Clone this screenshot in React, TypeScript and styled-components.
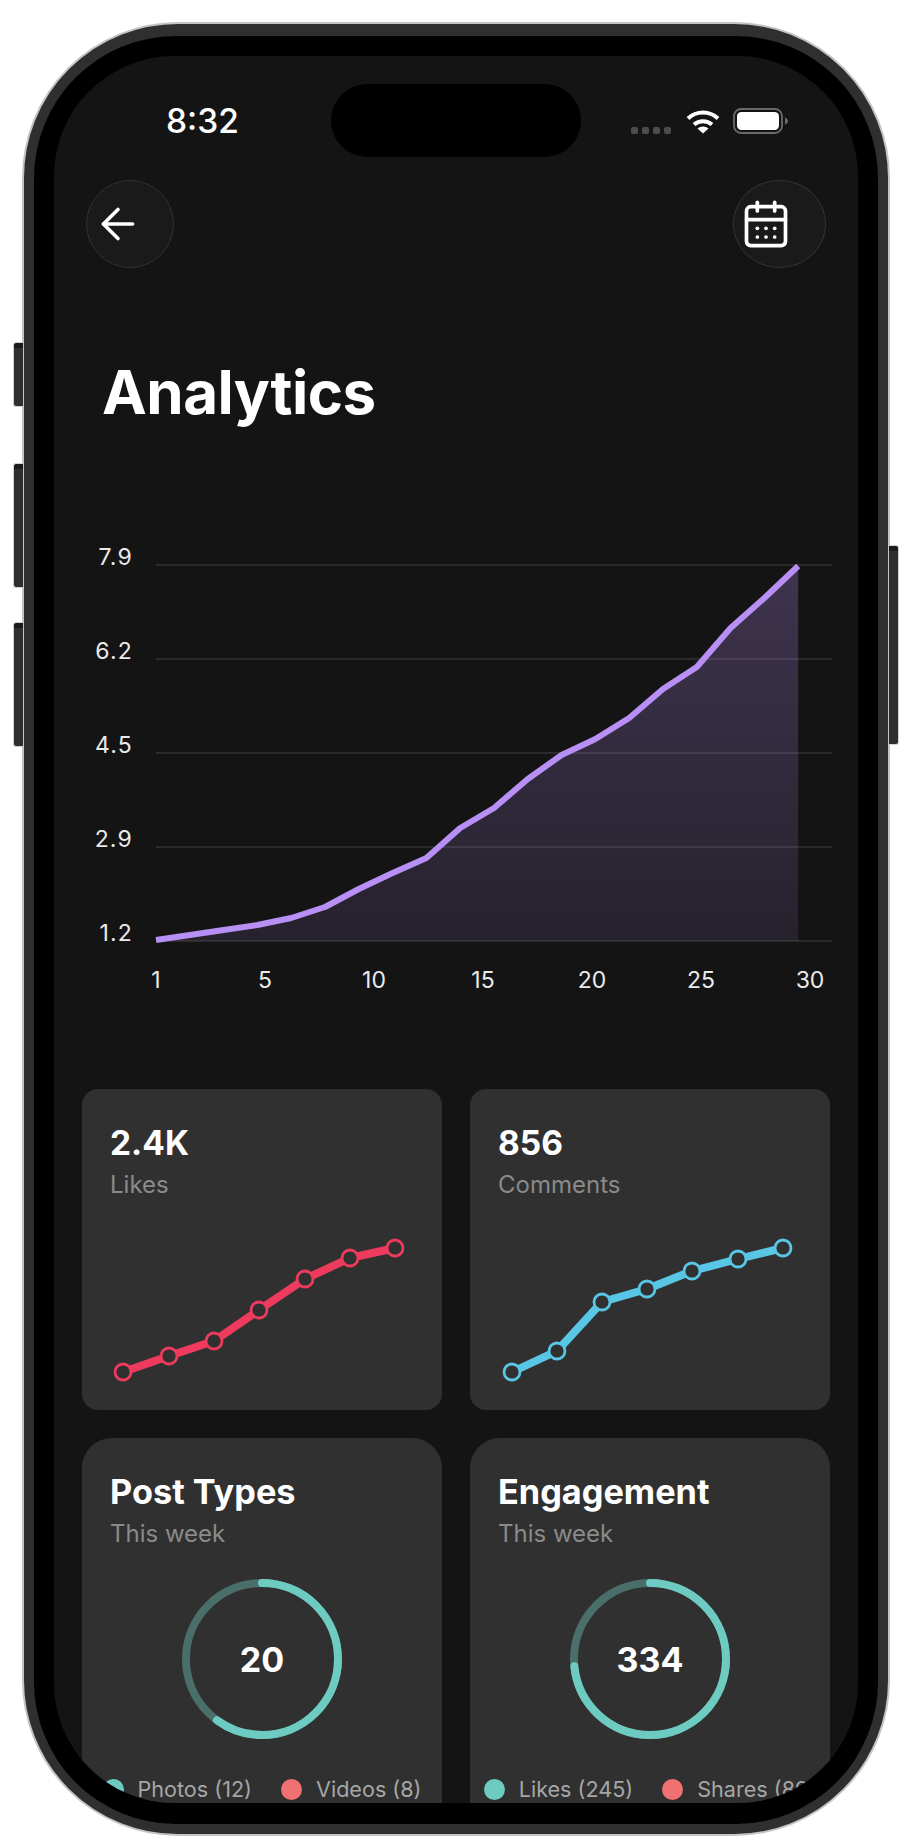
import styled, { createGlobalStyle } from "styled-components";
import { ArrowLeft, CalendarDays } from "lucide-react";

const GlobalStyle = createGlobalStyle`
  * {
    box-sizing: border-box;
  }

  html,
  body {
    margin: 0;
    background: #ffffff;
  }

  body {
    font-family: Inter, "Noto Sans", "Liberation Sans", sans-serif;
    color: #ffffff;
  }
`;

const Page = styled.div`
  width: 912px;
  height: 1840px;
  padding: 22px 22px 4px;
  overflow: hidden;
`;

const Device = styled.div`
  position: relative;
  width: 868px;
  height: 1814px;
  padding: 12px 10px 10px;
  background: #2f2f2f;
  border: 2px solid #c4c4c4;
  border-radius: 156px;
`;

const Bezel = styled.div`
  height: 100%;
  padding: 20px 20px 21px;
  background: #000000;
  border-radius: 142px;
`;

const Screen = styled.div`
  height: 1747px;
  background: #141414;
  border-radius: 120px;
  overflow: hidden;
`;

const SideButton = styled.div<{ $side: "left" | "right"; $top: number; $height: number }>`
  position: absolute;
  top: ${(props) => props.$top}px;
  ${(props) => props.$side}: -11px;
  width: 10px;
  height: ${(props) => props.$height}px;
  background: linear-gradient(#1b1b1b 0, #1b1b1b 5px, #2f2f2f 5px);
  border: 1.5px solid #cfcfcf;
  border-${(props) => (props.$side === "left" ? "right" : "left")}: none;
  border-radius: ${(props) => (props.$side === "left" ? "3px 0 0 3px" : "0 3px 3px 0")};
`;

const StatusBar = styled.div`
  display: grid;
  grid-template-columns: 1fr 250px 1fr;
  height: 124px;
  padding-top: 28px;
`;

const Time = styled.div`
  padding: 18px 0 0 112px;
  font-size: 33.5px;
  line-height: 38px;
  font-weight: 500;
`;

const Island = styled.div`
  width: 250px;
  height: 73px;
  background: #000000;
  border-radius: 37px;
`;

const StatusIcons = styled.div`
  display: flex;
  align-items: flex-start;
  padding: 24px 0 0 50px;
`;

const SignalDots = styled.div`
  display: flex;
  gap: 4px;
  margin: 19px 15px 0 0;
`;

const SignalDot = styled.span`
  width: 7px;
  height: 7px;
  background: #4c4c4c;
  border-radius: 2px;
`;

const WifiIcon = styled.svg`
  width: 34px;
  height: 26px;
  margin-right: 13px;
`;

const BatteryIcon = styled.svg`
  width: 56px;
  height: 26px;
`;

const NavRow = styled.div`
  display: flex;
  justify-content: space-between;
  padding: 0 32px;
`;

const RoundButton = styled.button<{ $width: number }>`
  display: flex;
  align-items: center;
  width: ${(props) => props.$width}px;
  height: 88px;
  padding: 0 0 0 6px;
  color: #ffffff;
  background: #1a1a1a;
  border: 1.5px solid #333333;
  border-radius: 50%;
`;

const Title = styled.h1`
  margin: 86px 0 0;
  padding-left: 48px;
  font-size: 60px;
  line-height: 76px;
  font-weight: 700;
  letter-spacing: -0.5px;
`;

const ChartSvg = styled.svg`
  display: block;
  width: 804px;
  height: 480px;
  margin-top: 110px;
`;

const AxisText = styled.text`
  font-family: Inter, "Noto Sans", sans-serif;
  font-size: 23px;
  fill: #eaeaea;
`;

const ValueAxisText = styled(AxisText)`
  letter-spacing: 1.2px;
`;

const CardGrid = styled.div`
  display: grid;
  grid-template-columns: 360px 360px;
  grid-auto-rows: min-content;
  gap: 28px;
  margin-top: 69px;
  padding: 0 28px;
`;

const StatCard = styled.div`
  height: 321px;
  background: #303030;
  border-radius: 16px;
`;

const DonutCard = styled.div`
  height: 420px;
  background: #303030;
  border-radius: 30px;
`;

const CardHead = styled.div`
  height: 120px;
  padding: 33px 0 0 28px;
`;

const CardValue = styled.div`
  font-size: 33.5px;
  line-height: 42px;
  font-weight: 700;
`;

const CardTitle = styled.div`
  font-size: 34.3px;
  line-height: 42px;
  font-weight: 700;
`;

const CardLabel = styled.div`
  margin-top: 6px;
  font-size: 24px;
  line-height: 30px;
  color: #8a8a8a;
`;

const SparkSvg = styled.svg`
  display: block;
  width: 360px;
  height: 201px;
`;

const DonutWrap = styled.div`
  display: grid;
  place-items: center;
  width: 160px;
  height: 160px;
  margin: 21px auto 0;

  > * {
    grid-area: 1 / 1;
  }
`;

const DonutValue = styled.div`
  font-size: 34px;
  font-weight: 700;
`;

const Legend = styled.div`
  display: flex;
  justify-content: center;
  gap: 29px;
  margin-top: 35px;
  white-space: nowrap;
`;

const LegendItem = styled.div`
  display: flex;
  align-items: center;
  gap: 14px;
  font-size: 21.6px;
  line-height: 30px;
  color: #a6a6a6;
`;

const LegendDot = styled.span<{ $color: string }>`
  width: 21px;
  height: 21px;
  background: ${(props) => props.$color};
  border-radius: 50%;
`;

const TEAL = "#6dcbc1";
const CORAL = "#f07171";

const gridRows = [
  { label: "7.9", y: 509 },
  { label: "6.2", y: 603 },
  { label: "4.5", y: 697 },
  { label: "2.9", y: 791 },
  { label: "1.2", y: 885 },
];

const xLabels = [
  { label: "1", x: 102 },
  { label: "5", x: 211 },
  { label: "10", x: 320 },
  { label: "15", x: 429 },
  { label: "20", x: 538 },
  { label: "25", x: 647 },
  { label: "30", x: 756 },
];

// chart values in screen coordinates, one point every 33.8px
const lineYs = [884, 879, 874, 869, 862, 851, 833, 817, 802, 772, 752, 723, 699, 683, 662, 633, 611, 572, 542, 510];
const linePoints = lineYs.map((y, i) => `${102 + 33.8 * i},${y}`).join(" ");

const likesPoints: [number, number][] = [
  [41, 163],
  [87, 147],
  [132, 132],
  [177, 101],
  [223, 70],
  [268, 49],
  [313, 39],
];

const commentsPoints: [number, number][] = [
  [42, 163],
  [87, 142],
  [132, 93],
  [177, 80],
  [222, 62],
  [268, 50],
  [313, 39],
];

const Sparkline = ({ points, color }: { points: [number, number][]; color: string }) => (
  <SparkSvg viewBox="0 0 360 201">
    <polyline
      points={points.map((p) => p.join(",")).join(" ")}
      fill="none"
      stroke={color}
      strokeWidth="8"
      strokeLinejoin="round"
    />
    {points.map(([x, y]) => (
      <circle key={x} cx={x} cy={y} r="8" fill="#303030" stroke={color} strokeWidth="2.8" />
    ))}
  </SparkSvg>
);

const Donut = ({ value, total }: { value: number; total: number }) => {
  const radius = 76;
  const length = 2 * Math.PI * radius;
  return (
    <DonutWrap>
      <svg width="160" height="160" viewBox="0 0 160 160">
        <circle cx="80" cy="80" r={radius} fill="none" stroke="#4a6e6a" strokeWidth="8" />
        <circle
          cx="80"
          cy="80"
          r={radius}
          fill="none"
          stroke={TEAL}
          strokeWidth="8"
          strokeLinecap="round"
          strokeDasharray={`${(length * value) / total} ${length}`}
          transform="rotate(-90 80 80)"
        />
      </svg>
      <DonutValue>{total}</DonutValue>
    </DonutWrap>
  );
};

const App = () => {
  return (
    <Page>
      <GlobalStyle />
      <Device>
        <SideButton $side="left" $top={318} $height={65} />
        <SideButton $side="left" $top={439} $height={125} />
        <SideButton $side="left" $top={598} $height={125} />
        <SideButton $side="right" $top={521} $height={200} />
        <Bezel>
          <Screen>
            <StatusBar>
              <Time>8:32</Time>
              <Island />
              <StatusIcons>
                <SignalDots>
                  <SignalDot />
                  <SignalDot />
                  <SignalDot />
                  <SignalDot />
                </SignalDots>
                <WifiIcon viewBox="0 0 34 26">
                  <g fill="none" stroke="#ffffff" strokeWidth="4">
                    <path d="M2 10.5C10.5 2.5 23.5 2.5 32 10.5" />
                    <path d="M8 16.5C13 12 21 12 26 16.5" />
                  </g>
                  <path d="M11.5 20.5C14.5 17.8 19.5 17.8 22.5 20.5L17 25.5Z" fill="#ffffff" />
                </WifiIcon>
                <BatteryIcon viewBox="0 0 56 26">
                  <rect x="1" y="1" width="48" height="24" rx="7" fill="none" stroke="#6a6a6a" strokeWidth="1.8" />
                  <rect x="4" y="4" width="42" height="18" rx="4.5" fill="#ffffff" />
                  <path d="M52 9.5C54 10.5 55 11.5 55 13C55 14.5 54 15.5 52 16.5Z" fill="#6a6a6a" />
                </BatteryIcon>
              </StatusIcons>
            </StatusBar>

            <NavRow>
              <RoundButton $width={88}>
                <ArrowLeft size={50} strokeWidth={1.7} />
              </RoundButton>
              <RoundButton $width={93}>
                <CalendarDays size={52} strokeWidth={1.7} />
              </RoundButton>
            </NavRow>

            <Title>Analytics</Title>

            <ChartSvg viewBox="0 484 804 480">
              <defs>
                <linearGradient id="areaFill" x1="0" y1="0" x2="0" y2="1">
                  <stop offset="0" stopColor="#b78ff5" stopOpacity="0.26" />
                  <stop offset="1" stopColor="#b78ff5" stopOpacity="0.11" />
                </linearGradient>
              </defs>
              {gridRows.map((row) => (
                <g key={row.label}>
                  <line x1="102" x2="778" y1={row.y} y2={row.y} stroke="#2a2a2a" strokeWidth="2" />
                  <ValueAxisText x="79" y={row.y} textAnchor="end">
                    {row.label}
                  </ValueAxisText>
                </g>
              ))}
              <polygon points={`102,885 ${linePoints} 744,885`} fill="url(#areaFill)" />
              <polyline points={linePoints} fill="none" stroke="#b78ff5" strokeWidth="6" strokeLinejoin="round" />
              {xLabels.map((item) => (
                <AxisText key={item.label} x={item.x} y="932" textAnchor="middle">
                  {item.label}
                </AxisText>
              ))}
            </ChartSvg>

            <CardGrid>
              <StatCard>
                <CardHead>
                  <CardValue>2.4K</CardValue>
                  <CardLabel>Likes</CardLabel>
                </CardHead>
                <Sparkline points={likesPoints} color="#ee3b5d" />
              </StatCard>
              <StatCard>
                <CardHead>
                  <CardValue>856</CardValue>
                  <CardLabel>Comments</CardLabel>
                </CardHead>
                <Sparkline points={commentsPoints} color="#58c6e4" />
              </StatCard>
              <DonutCard>
                <CardHead>
                  <CardTitle>Post Types</CardTitle>
                  <CardLabel>This week</CardLabel>
                </CardHead>
                <Donut value={12} total={20} />
                <Legend>
                  <LegendItem>
                    <LegendDot $color={TEAL} />
                    Photos (12)
                  </LegendItem>
                  <LegendItem>
                    <LegendDot $color={CORAL} />
                    Videos (8)
                  </LegendItem>
                </Legend>
              </DonutCard>
              <DonutCard>
                <CardHead>
                  <CardTitle>Engagement</CardTitle>
                  <CardLabel>This week</CardLabel>
                </CardHead>
                <Donut value={245} total={334} />
                <Legend>
                  <LegendItem>
                    <LegendDot $color={TEAL} />
                    Likes (245)
                  </LegendItem>
                  <LegendItem>
                    <LegendDot $color={CORAL} />
                    Shares (89)
                  </LegendItem>
                </Legend>
              </DonutCard>
            </CardGrid>
          </Screen>
        </Bezel>
      </Device>
    </Page>
  );
};

export default App;
